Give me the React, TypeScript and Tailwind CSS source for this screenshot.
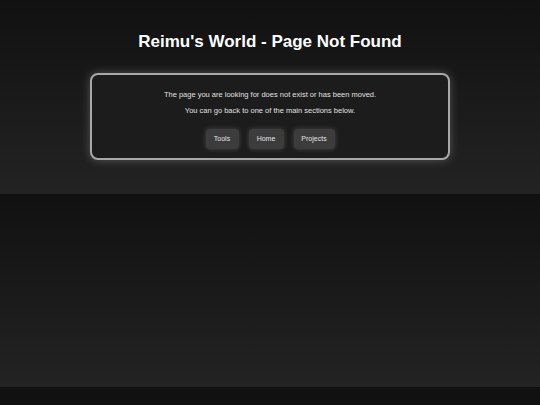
export default function App() {
  return (
    <div className="w-[540px] h-[405px] bg-[#111111] overflow-hidden" style={{ fontFamily: '"Liberation Sans", Arial, sans-serif' }}>
      <div className="h-[194px] bg-gradient-to-b from-[#111111] to-[#232323] flex flex-col items-center">
        <h1 className="mt-[31px] text-[17px] leading-[22px] font-bold text-white">Reimu's World - Page Not Found</h1>
        <div className="mt-[20px] w-[360px] h-[87px] rounded-[8px] border-2 border-[#a8a8a8] bg-[#1c1c1c] shadow-[0_0_10px_rgba(255,255,255,0.25)] flex flex-col items-center pt-[12px]">
          <p className="text-[7.5px] leading-[16px] text-[#e0e0e0]">The page you are looking for does not exist or has been moved.</p>
          <p className="text-[7.5px] leading-[16px] text-[#e0e0e0]">You can go back to one of the main sections below.</p>
          <div className="mt-[10px] flex gap-[10px]">
            <div className="w-[33px] h-[20px] rounded-[4px] bg-[#3c3c3c] shadow-[0_0_5px_rgba(255,255,255,0.2)] flex items-center justify-center text-[7px] text-[#e5e5e5]">Tools</div>
            <div className="w-[35px] h-[20px] rounded-[4px] bg-[#3c3c3c] shadow-[0_0_5px_rgba(255,255,255,0.2)] flex items-center justify-center text-[7px] text-[#e5e5e5]">Home</div>
            <div className="w-[41px] h-[20px] rounded-[4px] bg-[#3c3c3c] shadow-[0_0_5px_rgba(255,255,255,0.2)] flex items-center justify-center text-[7px] text-[#e5e5e5]">Projects</div>
          </div>
        </div>
      </div>
      <div className="h-[193px] bg-gradient-to-b from-[#111111] to-[#232323]"></div>
    </div>
  );
}
